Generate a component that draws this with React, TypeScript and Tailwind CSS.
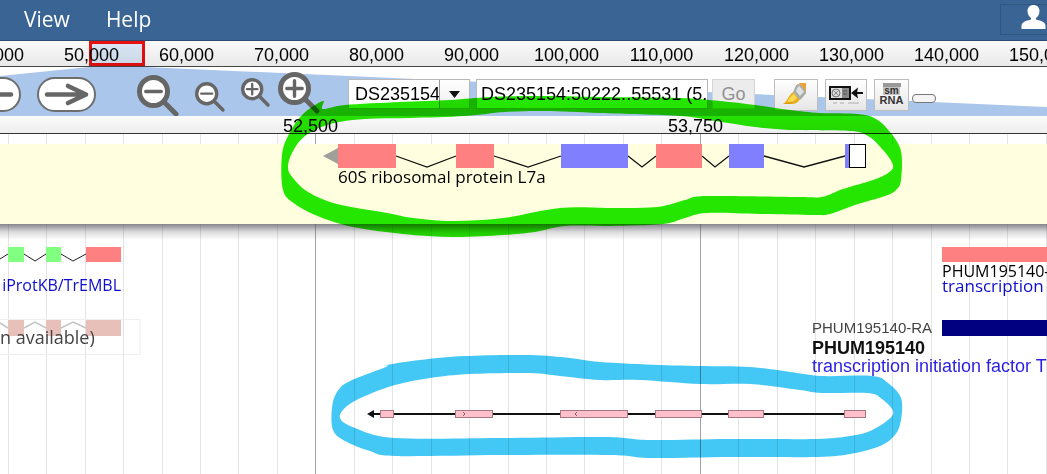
import React from "react";

type Point = [number, number];

const overviewTicks = Array.from({ length: 13 }, (_, i) => (40000 + i * 10000).toLocaleString("en-US"));
const gridLines = Array.from({ length: 60 }, (_, i) => ({ x: Math.round(7.7 + i * 38.45), major: i % 10 === 8 }));

/** Closed smooth curve through the given points. */
function smooth(points: Point[]): string {
  const n = points.length;
  let d = `M${points[0][0]} ${points[0][1]}`;
  for (let i = 0; i < n; i++) {
    const a = points[(i - 1 + n) % n];
    const b = points[i];
    const c = points[(i + 1) % n];
    const e = points[(i + 2) % n];
    d += `C${b[0] + (c[0] - a[0]) / 6} ${b[1] + (c[1] - a[1]) / 6} ${c[0] - (e[0] - b[0]) / 6} ${c[1] - (e[1] - b[1]) / 6} ${c[0]} ${c[1]}`;
  }
  return d + "Z";
}

const greenOuter: Point[] = [
  [323, 101], [323, 109], [345, 105], [400, 102], [450, 100], [490, 97], [540, 96], [600, 97], [680, 98], [720, 101], [755, 105], [790, 110], [820, 113], [858, 114], [876, 119], [890, 132], [901, 151], [901, 180], [896, 190], [885, 196], [855, 205],
  [830, 214], [813, 215], [760, 214], [707, 213], [685, 218], [663, 224], [610, 226], [565, 226], [535, 232], [503, 235], [453, 237], [403, 234], [353, 227], [320, 217], [295, 204], [283, 190], [282, 155], [289, 134], [303, 114],
];
const greenInner: Point[] = [
  [330, 124], [365, 119], [410, 118], [465, 116], [505, 112], [545, 111], [600, 113], [680, 116], [715, 121], [755, 127], [790, 130], [850, 131], [868, 136], [883, 150], [893, 165], [888, 173], [873, 180], [843, 189], [822, 197], [800, 197],
  [707, 196], [685, 200], [657, 207], [610, 208], [560, 208], [503, 218], [453, 221], [413, 218], [387, 213], [337, 204], [308, 192], [293, 178], [288, 168], [292, 153], [305, 136],
];
const cyanOuter: Point[] = [
  [386, 367], [387, 365], [420, 360], [465, 356], [530, 355], [570, 358], [600, 362], [660, 365], [700, 366], [750, 367], [790, 372], [822, 376], [872, 376], [888, 383], [901, 398], [901, 420], [895, 435], [880, 446], [850, 454], [815, 457], [730, 457],
  [650, 458], [610, 455], [500, 455], [395, 456], [370, 451], [345, 441], [333, 430], [332, 408], [337, 392], [350, 381],
];
const cyanInner: Point[] = [
  [340, 418], [347, 406], [365, 396], [395, 385], [430, 378], [470, 374], [530, 373], [560, 376], [600, 380], [640, 380], [700, 384], [750, 384], [800, 390], [822, 393], [868, 393], [882, 399], [893, 411], [888, 420], [870, 431], [850, 436],
  [815, 439], [730, 439], [650, 440], [605, 437], [500, 438], [395, 438], [355, 428],
];

function Highlights() {
  return (
    <svg className="pointer-events-none absolute inset-0 z-20 h-[474px] w-full mix-blend-multiply" aria-hidden="true">
      <path fill="#25e600" fillRule="evenodd" d={smooth(greenOuter) + smooth(greenInner)} />
      <path fill="#43c7f5" fillRule="evenodd" d={smooth(cyanOuter) + smooth(cyanInner)} />
    </svg>
  );
}

function GridLines() {
  return (
    <svg className="absolute inset-0 h-full w-full" aria-hidden="true">
      {gridLines.map((g) => (
        <rect key={g.x} x={g.x} y="0" width="1" height="100%" fill={g.major ? "#a3a3a3" : "#e4e4e4"} />
      ))}
    </svg>
  );
}

function PanButton({ flip, className }: { flip?: boolean; className: string }) {
  return (
    <button type="button" aria-label={flip ? "Pan left" : "Pan right"} className={className}>
      <svg width="59" height="35" viewBox="0 0 59 35" className={flip ? "-scale-x-100" : ""}>
        <rect x="1" y="1" width="57" height="33" rx="16.5" fill="#fff" stroke="#6e6e6e" strokeWidth="2" />
        <path d="M10 17.5H49M31 9L49 17.5L31 26" fill="none" stroke="#666" strokeWidth="4.6" strokeLinecap="round" strokeLinejoin="round" />
      </svg>
    </button>
  );
}

function Lens({ size, r, stroke, plus, end }: { size: number; r: number; stroke: number; plus?: boolean; end: number }) {
  const c = r + stroke / 2;
  const arm = r * 0.55;
  const from = c + r * 0.75;
  return (
    <svg width={size} height={size} aria-hidden="true">
      <path d={`M${from} ${from}L${end} ${end}`} stroke="#666" strokeWidth={stroke} strokeLinecap="round" />
      <circle cx={c} cy={c} r={r} fill="#fff" stroke="#666" strokeWidth={stroke} />
      <path d={`M${c - arm} ${c}H${c + arm}${plus ? `M${c} ${c - arm}V${c + arm}` : ""}`} stroke="#666" strokeWidth={stroke * 0.68} strokeLinecap="round" />
    </svg>
  );
}

function Toolbar() {
  const iconButton = "flex h-8 shrink-0 items-center justify-center border border-[#bdbdbd] bg-linear-to-b from-white to-[#e6e6e6]";
  return (
    <div className="relative h-[49px] overflow-hidden bg-white">
      <svg className="absolute inset-0 h-full w-full" aria-hidden="true">
        <path d="M0 9L89 0H144L1250 49H0Z" fill="#aac6ea" />
      </svg>
      <div className="relative flex items-start pt-3">
        <PanButton flip className="-mt-[2px] -ml-[38px] shrink-0" />
        <PanButton className="-mt-[2px] ml-[16px] shrink-0" />
        <button type="button" aria-label="Zoom out far" className="-mt-1 ml-[41px] w-[44px] shrink-0"><Lens size={44} r={14} stroke={5} end={39} /></button>
        <button type="button" aria-label="Zoom out" className="mt-[3px] ml-[14px] w-[32px] shrink-0"><Lens size={32} r={10} stroke={3.4} end={28} /></button>
        <button type="button" aria-label="Zoom in" className="-mt-[1px] ml-[14px] w-[32px] shrink-0"><Lens size={32} r={9.5} stroke={3.4} end={27} plus /></button>
        <button type="button" aria-label="Zoom in close" className="-mt-[7px] ml-[5px] w-[44px] shrink-0"><Lens size={44} r={14} stroke={5} end={39} plus /></button>
        <div className="ml-[26px] flex h-[30px] w-[122px] shrink-0 border border-[#b8b8b8] bg-white">
          <input aria-label="Reference sequence" defaultValue="DS235154" className="w-[91px] min-w-0 border-r border-[#999] bg-white pl-[6px] text-lg leading-6 outline-none" />
          <button type="button" aria-label="Show sequences" className="flex flex-1 items-center justify-center bg-linear-to-b from-white to-[#eee]">
            <svg width="11" height="7"><path d="M0 0H11L5.5 7Z" fill="#111" /></svg>
          </button>
        </div>
        <input aria-label="Location" defaultValue="DS235154:50222..55531 (5." className="ml-[6px] h-[30px] w-[232px] shrink-0 border border-[#b8b8b8] bg-white pr-0 pl-1 text-lg leading-6 outline-none" />
        <button type="button" className="ml-1 h-[30px] w-[43px] shrink-0 border border-[#d4d4d4] bg-[#ececec] text-lg leading-6 text-[#929292]">Go</button>
        <button type="button" aria-label="Highlight" className={`${iconButton} ml-[19px] w-[44px]`}>
          <svg width="26" height="26" viewBox="0 0 26 26">
            <path d="M0 22C4 20 5 14 10 10L17 17C15 21 12 22 8 22Z" fill="#e9ae1c" />
            <path d="M5 18C7 16 8 13 11 12L14 16C12 19 9 20 5 20Z" fill="#fbd950" />
            <path d="M16 1H23V12H19Z" fill="#f0a23a" />
            <path d="M10 10C12 7 12 3 15 2C18 3 23 7 23 11C21 13 20 16 17 18Z" fill="#a8adac" />
            <path d="M13 9C14 7 14 5 16 4C18 6 20 8 21 10C19 11 18 13 17 14Z" fill="#dfe2e0" />
            <path d="M0 22L9 20L8 22Z" fill="#d59a16" />
          </svg>
        </button>
        <button type="button" aria-label="Toggle track labels" className={`${iconButton} ml-[7px] w-[42px]`}>
          <svg width="36" height="28" viewBox="0 0 36 28">
            <rect x="2" y="6" width="20" height="12" fill="#ddd" stroke="#111" strokeWidth="2" />
            <circle cx="8" cy="12" r="4" fill="none" stroke="#777" />
            <path d="M5 9L11 15M11 9L5 15" stroke="#888" />
            <path d="M14 7H21V17H14Z" fill="#888" />
            <path d="M15 10H19M15 13H19" stroke="#555" />
            <path d="M35 12H28" stroke="#111" strokeWidth="2" />
            <path d="M23 12L30 6.500L29 12L30 17.500Z" fill="#111" />
            <path d="M5 22H9M12 22H16M20 22H31" stroke="#ccc" strokeWidth="2" />
          </svg>
        </button>
        <button type="button" aria-label="smRNA" className={`${iconButton} ml-[7px] w-[35px] flex-col pb-[3px] font-bold text-[#333]`}>
          <span className="h-[4px] w-[18px] bg-[#999]" />
          <span className="bg-[#c4c4c4] px-[1px] text-[10px] leading-[8px]">sm</span>
          <span className="text-[11px] leading-[10px]">RNA</span>
        </button>
        <button type="button" aria-label="More" className="mt-[15px] ml-[3px] h-[9px] w-6 shrink-0 rounded border border-[#777] bg-[#f4f4f4]" />
      </div>
    </div>
  );
}

function PinnedTrack() {
  const exons = [
    { x: 338, w: 58, c: "#ff8080" }, { x: 456, w: 38, c: "#ff8080" }, { x: 561, w: 67, c: "#8080ff" },
    { x: 656, w: 46, c: "#ff8080" }, { x: 729, w: 35, c: "#8080ff" }, { x: 845, w: 4, c: "#8080ff" },
  ];
  return (
    <section className="relative z-10 h-20 bg-[#ffffdf]">
      <svg className="absolute inset-0 h-full w-full" aria-hidden="true">
        <path d="M323 12L338 4V20Z" fill="#a09f9a" />
        <path d="M396 12L427 23L456 12M494 12L528 23L561 12M628 12L642 23L656 12M702 12L715 23L729 12M764 12L804 23L845 12" fill="none" stroke="#111" strokeWidth="1.3" />
        {exons.map((e) => <rect key={e.x} x={e.x} y="0" width={e.w} height="24" fill={e.c} />)}
        <rect x="849.5" y=".5" width="16" height="23" fill="#fff" stroke="#000" />
      </svg>
      <span className="absolute top-[21px] left-[338px] text-[17px] leading-6 whitespace-nowrap [font-family:'Open_Sans',sans-serif]">60S ribosomal protein L7a</span>
      <div className="absolute inset-x-0 top-full h-4 bg-linear-to-b from-[#50505a]/70 via-[#50505a]/20 to-transparent" />
    </section>
  );
}

function Tracks() {
  const matches = [[380, 14], [455, 38], [560, 68], [655, 47], [728, 36], [844, 22]];
  return (
    <section className="relative h-[250px] overflow-hidden">
      <svg className="absolute inset-0 h-full w-full" aria-hidden="true">
        <path d="M0 35L8 30M24 30L35 37L46 30M61 30L73 37L86 30" fill="none" stroke="#222" />
        <path d="M8 23H24V38H8ZM46 23H61V38H46Z" fill="#80ff80" />
        <path d="M86 23H121V38H86ZM942 23H3000V38H942Z" fill="#ff8080" />
        <path d="M0 99L8 104M24 104L35 98L46 104M61 104L73 98L86 104" fill="none" stroke="#c4c4c4" strokeWidth="1.500" />
        <path d="M8 96H24V112H8ZM46 96H61V112H46ZM86 96H121V112H86Z" fill="#e6c0b9" />
        <rect x="-1" y="95.5" width="141" height="35" fill="none" stroke="#eee" />
        <path d="M942 96H3000V112H942Z" fill="#000080" />
        <path d="M372 190H866" stroke="#111" strokeWidth="2" />
        <path d="M367 190L374 186V194Z" fill="#111" />
        {matches.map(([x, w]) => <rect key={x} x={x + 0.5} y="186.5" width={w - 1} height="7" fill="#ffc0cb" stroke="#a87880" />)}
        <path d="M463 188L465 190L463 192M577 188L575 190L577 192" fill="none" stroke="#8d6068" />
      </svg>
      <div className="[font-family:'Open_Sans',sans-serif]">
        <a href="#uniprot" className="absolute top-[49px] left-0 flex w-[121px] justify-end text-base leading-6 whitespace-nowrap text-[#0d0dcc]">iProtKB/TrEMBL</a>
        <span className="absolute top-[101px] left-0 text-lg leading-6 whitespace-nowrap text-[#444]">n available)</span>
        <div className="absolute top-[39px] left-[942px] flex flex-col whitespace-nowrap">
          <span className="text-base leading-4">PHUM195140-RA</span>
          <a href="#factor" className="text-[17px] leading-[14px] text-[#0d0dcc]">transcription initiation factor</a>
        </div>
      </div>
      <div className="absolute top-[94px] left-[812px] flex flex-col whitespace-nowrap">
        <span className="text-[15px] leading-5 text-[#444]">PHUM195140-RA</span>
        <strong className="text-lg leading-5 text-[#111]">PHUM195140</strong>
        <a href="#tfiid" className="text-lg leading-4 text-[#2a1fe0]">transcription initiation factor TFIID</a>
      </div>
    </section>
  );
}

export default function App() {
  return (
    <main className="relative w-full overflow-hidden bg-white text-black [font-family:'Liberation_Sans',Arial,sans-serif]">
      <header className="flex h-[41px] items-start justify-between overflow-hidden border-b border-[#2c4a6e] bg-[#396494] text-white">
        <nav className="flex gap-9 pt-[3px] pl-6 text-[21px] leading-8 [font-family:'Open_Sans',sans-serif]">
          <button type="button">View</button>
          <button type="button">Help</button>
        </nav>
        <button type="button" aria-label="Account" className="mt-1 h-[31px] w-[47px] border border-r-0 border-[#315780] pl-5">
          <svg width="25" height="30" viewBox="0 0 25 30">
            <path fill="#fff" d="M12.500 0C8.700 0 6.500 2.700 6.500 6C6.500 9 8 11.700 10 13V14.500C5 15.500 .5 17 .5 21V24H24.500V21C24.500 17 20 15.500 15 14.500V13C17 11.700 18.500 9 18.500 6C18.500 2.700 16.300 0 12.500 0Z" />
          </svg>
        </button>
      </header>
      <div className="relative h-[26px] overflow-hidden border-b border-[#444] bg-linear-to-b from-[#fafafa] to-[#e9e9e9]">
        <div className="relative -ml-[51px] flex pt-[2px] text-lg leading-6">
          {overviewTicks.map((t) => <span key={t} className="w-[95px] shrink-0 text-center">{t}</span>)}
        </div>
        <div className="absolute top-0 left-[89px] h-full w-14 border-[3px] border-[#ec1010] bg-[#c8ddf6]/60 bg-clip-padding mix-blend-multiply" />
      </div>
      <Toolbar />
      <div className="flex h-[18px] border-b border-[#333] bg-linear-to-b from-[#fbfbfb] to-[#eee] pl-[118px] text-lg leading-5">
        <span className="w-[385px] shrink-0 text-center">52,500</span>
        <span className="w-[385px] shrink-0 text-center">53,750</span>
      </div>
      <div className="relative">
        <GridLines />
        <div className="h-[10px]" />
        <PinnedTrack />
        <Tracks />
      </div>
      <Highlights />
    </main>
  );
}
